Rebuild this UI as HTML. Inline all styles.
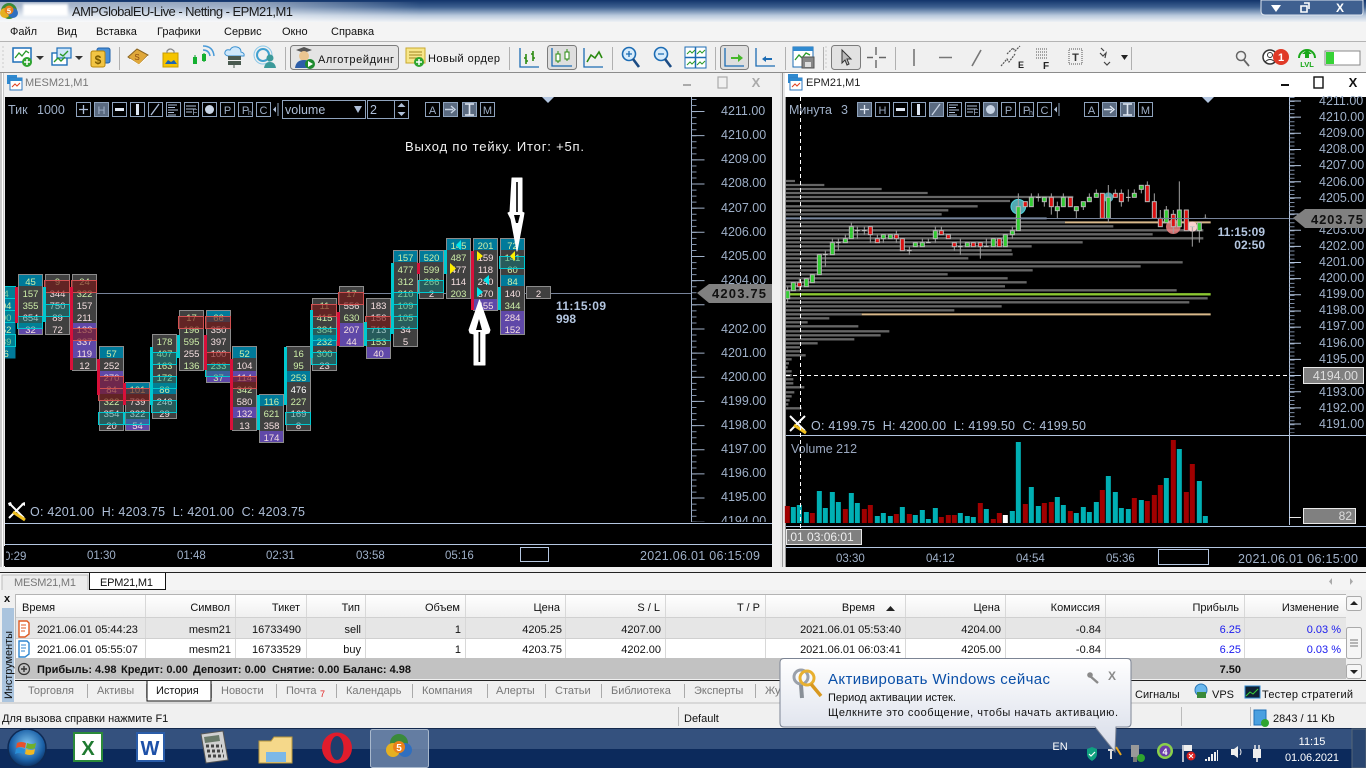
<!DOCTYPE html>
<html lang="ru"><head><meta charset="utf-8"><title>AMPGlobalEU-Live</title>
<style>
html,body{margin:0;padding:0;background:#f0f0f0;overflow:hidden;width:1366px;height:768px}
svg{display:block;font-family:"Liberation Sans","Noto Sans CJK SC",sans-serif}
text{white-space:pre}
.ui{font-size:11px;fill:#111}
.e{text-anchor:end}
.m{text-anchor:middle}
.cg{font-size:12.5px;fill:#aebfd8}
.ax{font-size:12.5px;fill:#9fb0c8}
.tl{font-size:11.5px;fill:#9fb0c8}
.tb{fill:none;stroke:#8fa3bd}
.tbt{font-size:11px;fill:#9fb0c8;text-anchor:middle}
.tabg{font-size:11px;fill:#777}
.g{fill:#404040;stroke:#8c8c8c}
.t{fill:#007a9a}
.p{fill:#5f48a8}
.rb{fill:rgba(120,20,20,.62);stroke:#d05050}
.bx{fill:rgba(0,140,140,.38);stroke:#00c8d0}
.fp text{font-size:9.5px;text-anchor:middle;fill:#cdeea8}
.fp text.c{fill:#f5dfe0}
.bar{stroke:none}
</style></head><body>
<svg width="1366" height="768" viewBox="0 0 1366 768" xmlns="http://www.w3.org/2000/svg">
<defs>
<linearGradient id="tg" x1="0" y1="0" x2="0" y2="1"><stop offset="0" stop-color="#12346a"/><stop offset=".32" stop-color="#3d6090"/><stop offset=".7" stop-color="#b8c8dc"/><stop offset="1" stop-color="#eef1f5"/></linearGradient>
<linearGradient id="gl" x1="0" y1="0" x2="1" y2="0"><stop offset="0" stop-color="#fff" stop-opacity=".6"/><stop offset=".6" stop-color="#fff" stop-opacity=".5"/><stop offset="1" stop-color="#fff" stop-opacity="0"/></linearGradient>
<linearGradient id="hd" x1="0" y1="0" x2="0" y2="1"><stop offset="0" stop-color="#fff"/><stop offset="1" stop-color="#efefef"/></linearGradient>
<linearGradient id="pop" x1="0" y1="0" x2="0" y2="1"><stop offset="0" stop-color="#fff"/><stop offset="1" stop-color="#d6dbe8"/></linearGradient>
<radialGradient id="orb" cx=".5" cy=".4" r=".6"><stop offset="0" stop-color="#7fc4ee"/><stop offset=".7" stop-color="#1c62a8"/><stop offset="1" stop-color="#0c2f60"/></radialGradient>
<clipPath id="cl"><rect x="5" y="97" width="686" height="426"/></clipPath>
<clipPath id="cr"><rect x="786" y="97" width="503" height="430"/></clipPath>
<filter id="soft"><feGaussianBlur stdDeviation="1.2"/></filter>
</defs>
<rect width="1366" height="768" fill="#f0f0f0"/>

<!-- title bar -->
<rect width="1366" height="22" fill="url(#tg)"/>
<rect x="0" y="2" width="420" height="20" fill="url(#gl)"/>
<circle cx="9" cy="11" r="8" fill="#3a8a3a"/><circle cx="5" cy="13" r="5" fill="#e6b020"/><circle cx="13" cy="13" r="5" fill="#2f6fbf"/><circle cx="9" cy="10" r="4.5" fill="#e8801a"/>
<text x="9" y="13.5" class="m" font-size="7.5" font-weight="bold" fill="#fff">5</text>
<rect x="23" y="4" width="45" height="12" fill="#fff" filter="url(#soft)"/>
<text x="72" y="16" font-size="13" fill="#1a1a1a" textLength="221">AMPGlobalEU-Live - Netting - EPM21,M1</text>
<path d="M1261 0V11q0 4 4 4H1361q2 0 2-4V0z" fill="#3f6090" stroke="#dfe6f0"/>
<path d="M1271 5h10l-5 7z" fill="#fff"/><path d="M1301 6h6v6h-6zM1304 3h5v6" fill="none" stroke="#fff" stroke-width="1.6"/>
<text x="1340" y="12" class="m" font-size="12" font-weight="bold" fill="#fff">X</text>

<!-- menu -->
<rect y="22" width="1366" height="19" fill="#f4f4f4"/>
<g class="ui" font-size="11"><text class="ui" x="10" y="35">Файл</text><text class="ui" x="57" y="35">Вид</text><text class="ui" x="96" y="35">Вставка</text><text class="ui" x="157" y="35">Графики</text><text class="ui" x="224" y="35">Сервис</text><text class="ui" x="282" y="35">Окно</text><text class="ui" x="331" y="35">Справка</text></g>
<rect y="41" width="1366" height="1" fill="#b4b4b4"/>
<rect y="42" width="1366" height="30" fill="#f0f0f0"/>
<rect y="72" width="1366" height="1" fill="#8c8c8c"/>

<!-- main toolbar -->
<path d="M3 46v24" stroke="#ccc" stroke-dasharray="2 2"/>
<rect x="13" y="48" width="18" height="14" fill="#fff" stroke="#1e6fb8" stroke-width="1.5"/><path d="M15 58l4-5 3 3 4-5 3 2" fill="none" stroke="#2a9a2a" stroke-width="1.3"/><circle cx="27" cy="62" r="5" fill="#2fa52f"/><path d="M24 62h6M27 59v6" stroke="#fff" stroke-width="1.5"/>
<path d="M36 56h8l-4 4z" fill="#333"/>
<rect x="52" y="53" width="15" height="12" fill="#fff" stroke="#1e6fb8" stroke-width="1.4"/><rect x="57" y="48" width="14" height="10" fill="#cfe6fa" stroke="#1e6fb8" stroke-width="1.2"/><path d="M54 62l4-4 3 3 4-4M60 54l3 2 5-5" fill="none" stroke="#2a9a2a" stroke-width="1.4"/>
<path d="M75 56h8l-4 4z" fill="#333"/>
<rect x="97" y="48" width="13" height="15" rx="2" fill="#4b90d8" stroke="#1e5fa8"/><rect x="91" y="51" width="14" height="16" rx="2" fill="#f2c544" stroke="#b8860b"/><text x="98" y="64" class="m" font-size="12" font-weight="bold" fill="#7a5a00">$</text>
<rect x="119" y="47" width="1" height="23" fill="#b0b0b0"/>
<path d="M128 57l9-8 11 6-9 10z" fill="#e0a83a" stroke="#8a6420"/><path d="M130 59l9 6 9-9" fill="none" stroke="#fff" stroke-width="1"/><text x="137" y="60" class="m" font-size="8" fill="#8a4a10">S</text>
<path d="M163 53h15v14h-15z" fill="#f5c400" stroke="#c99c00"/><path d="M167 53v-2q3-4 7 0v2" fill="none" stroke="#888" stroke-width="1.2"/><path d="M165 64l3-4 3 2 3-2 3 4z" fill="#1c64b4"/>
<path d="M195 55v9M204 53v9" stroke="#0c9a2a" stroke-width="1"/><rect x="193" y="57" width="4" height="7" fill="#14b030"/><rect x="202" y="54" width="4" height="7" fill="#14b030"/><path d="M203 50q6 0 7 6M203 46q10 0 11 10" fill="none" stroke="#4a9bd8" stroke-width="1.5"/>
<path d="M228 56q-4-1-3-4 1-3 5-2 2-4 7-3 4 1 4 5 4 1 3 4z" fill="#cfe8fb" stroke="#3a90d0"/><rect x="228" y="56" width="13" height="4" fill="#4a5a50"/><rect x="228" y="61" width="13" height="4" fill="#4a5a50"/><path d="M234 65v3" stroke="#4a5a50"/>
<circle cx="263" cy="55" r="6" fill="none" stroke="#40a0d0" stroke-width="2"/><circle cx="263" cy="55" r="9" fill="none" stroke="#8cc8e8"/><circle cx="270" cy="58" r="3.5" fill="#3c9a9a"/><path d="M264 68q1-6 6-6 5 0 6 6z" fill="#3c9a9a"/>
<rect x="285" y="47" width="1" height="23" fill="#b0b0b0"/>
<rect x="290.5" y="45.5" width="108" height="24" rx="3" fill="#e4e4e4" stroke="#7c7c7c"/>
<path d="M296 50l8-3 8 3-8 3z" fill="#555"/><circle cx="304" cy="56" r="5" fill="#eac590"/><path d="M295 68q1-8 9-8t8 8z" fill="#2d5ea8"/><circle cx="310" cy="64" r="5" fill="#1d8a2e"/><path d="M308 61l5 3-5 3z" fill="#fff"/>
<text x="318" y="63" class="ui" textLength="76">Алготрейдинг</text>
<rect x="406" y="48" width="19" height="15" fill="#f7e68a" stroke="#c9a92c"/><path d="M409 52h13M409 55h13M409 58h13" stroke="#a08522"/><circle cx="419" cy="62" r="5" fill="#2fa52f"/><path d="M416 62h6M419 59v6" stroke="#fff" stroke-width="1.5"/>
<text x="428" y="62" class="ui" textLength="72">Новый ордер</text>
<rect x="509" y="47" width="1" height="23" fill="#b0b0b0"/>
<g fill="none" stroke="#1c6cb4" stroke-width="1.3"><path d="M520 48v19h19M584 48v19h19"/></g>
<path d="M526 54v10M533 51v10M524 58h2M526 61h2M531 54h2M533 58h2" stroke="#2a8a10" stroke-width="1.6" fill="none"/>
<rect x="547.5" y="45.5" width="29" height="24" rx="3" fill="#dedede" stroke="#7c7c7c"/>
<path d="M552 48v18h20" fill="none" stroke="#1c6cb4" stroke-width="1.3"/><path d="M558 51v12M567 49v12" stroke="#2a8a10"/><rect x="556" y="54" width="4" height="7" fill="#fff" stroke="#2a8a10"/><rect x="565" y="52" width="4" height="7" fill="#fff" stroke="#2a8a10"/>
<path d="M587 62l4-7 4 3 4-6 3 6" fill="none" stroke="#2a8a10" stroke-width="1.6"/>
<rect x="612" y="47" width="1" height="23" fill="#b0b0b0"/>
<g fill="#d8ecfb" stroke="#1c6cb4" stroke-width="1.6"><circle cx="629" cy="54" r="6.5"/><circle cx="661" cy="54" r="6.5"/></g>
<path d="M633 59l6 8M665 59l6 8" stroke="#1c4c84" stroke-width="2.6"/><path d="M626 54h6M629 51v6M658 54h6" stroke="#1c6cb4" stroke-width="1.3"/>
<rect x="685" y="47" width="21" height="21" fill="#fff" stroke="#1c6cb4"/><path d="M685 57.5h21M695.5 47v21" stroke="#1c6cb4" stroke-width="1.5"/><path d="M687 54l3-3 2 2 3-3M697 54l3-3 2 2 3-3M687 65l3-3 2 2 3-3M697 65l3-3 2 2 3-3" fill="none" stroke="#2a9a2a"/>
<rect x="715" y="47" width="1" height="23" fill="#b0b0b0"/>
<rect x="720.5" y="45.5" width="28" height="24" rx="3" fill="#dedede" stroke="#7c7c7c"/>
<path d="M725 48v18h19M756 48v18h19" fill="none" stroke="#1c6cb4" stroke-width="1.3"/><path d="M731 57h7v-3l5 4-5 4v-3h-7z" fill="#45b82a"/><path d="M772 58h-6v-2l-4 3 4 3v-2h6z" fill="#1c6cb4"/>
<rect x="785" y="47" width="1" height="23" fill="#b0b0b0"/>
<rect x="793" y="47" width="20" height="20" fill="#fff" stroke="#1c6cb4"/><rect x="793" y="47" width="20" height="4" fill="#2f8ad0"/><path d="M795 60l4-5 3 3 4-5 4 2" fill="none" stroke="#2a9a2a" stroke-width="1.3"/><rect x="802" y="57" width="12" height="11" fill="#888" stroke="#555"/><rect x="805" y="62" width="6" height="5" fill="#ddd"/>
<rect x="823" y="47" width="1" height="23" fill="#b0b0b0"/>
<path d="M826 46v24" stroke="#ccc" stroke-dasharray="2 2"/>
<rect x="831.5" y="45.5" width="29" height="24" rx="3" fill="#e2e2e2" stroke="#7c7c7c"/>
<path d="M842 50v13l3-3 2 5 2-1-2-5h4z" fill="#bbb" stroke="#333"/>
<path d="M876 47v8M876 60v8M867 57.5h6M879 57.5h7" stroke="#666" stroke-width="1.4"/>
<rect x="895" y="47" width="1" height="23" fill="#b0b0b0"/>
<path d="M914 49v17M939 57.5h13M972 66l9-16" stroke="#777" stroke-width="1.6"/>
<path d="M1001 66l6-7 2 3 6-8M1007 54l6-6 2 3 5-5" fill="none" stroke="#555" stroke-width="1.2" stroke-dasharray="2 1"/><text x="1018" y="68" font-size="9" font-weight="bold" fill="#222">E</text>
<path d="M1036 49h12M1036 52h12M1036 55h12M1036 58h12" stroke="#555" stroke-dasharray="1 1"/><text x="1043" y="69" font-size="10" font-weight="bold" fill="#222">F</text>
<rect x="1069" y="49" width="13" height="15" fill="none" stroke="#555" stroke-dasharray="1 1"/><text x="1075.5" y="61" class="m" font-size="11" font-weight="bold" fill="#333">T</text>
<path d="M1100 53l3 3 3-3-1 5M1104 62l3 3 3-3M1101 48l3 3" fill="none" stroke="#444" stroke-width="1.2"/>
<path d="M1121 55h7l-3.500 5z" fill="#222"/>
<rect x="1131" y="47" width="1" height="23" fill="#b0b0b0"/>
<circle cx="1241" cy="56" r="4.500" fill="none" stroke="#666" stroke-width="1.5"/><path d="M1244 60l5 6" stroke="#666" stroke-width="1.8"/>
<circle cx="1270" cy="57" r="7" fill="#fff" stroke="#333" stroke-width="1.5"/><circle cx="1270" cy="55" r="2.500" fill="none" stroke="#333"/><path d="M1265 62q5-5 10 0" fill="none" stroke="#333"/>
<circle cx="1281" cy="57" r="8" fill="#e03a28"/><text x="1281" y="61" class="m" font-size="11" font-weight="bold" fill="#fff">1</text>
<path d="M1299 58a8 8 0 0 1 16 0" fill="none" stroke="#1aa81a" stroke-width="2"/><path d="M1307 50l5 4h-3v4h-4v-4h-3z" fill="#1aa81a"/><text x="1307" y="67" class="m" font-size="7.500" font-weight="bold" fill="#1aa81a">LVL</text>
<rect x="1325" y="51" width="35" height="14" fill="#fff" stroke="#888"/><rect x="1326" y="52" width="8" height="12" fill="#36d236"/>

<!-- windows -->
<rect y="73" width="780" height="499" fill="#f0f0f0"/>
<rect x="0" y="73" width="4" height="499" fill="#c9c9c9"/>
<rect x="2" y="73" width="1" height="499" fill="#fff"/>
<rect x="7" y="75" width="10" height="9" fill="#2f8ad0"/><rect x="10" y="78" width="12" height="12" fill="#fff" stroke="#2f7ac0"/><rect x="10" y="78" width="12" height="3" fill="#2f8ad0"/><path d="M12 87l3-3 2 2 3-3" stroke="#e04020" fill="none"/>
<text x="25" y="86" font-size="11" fill="#777">MESM21,M1</text>
<path d="M683 85h8" stroke="#aaa" stroke-width="2"/><rect x="718" y="77" width="9" height="11" fill="none" stroke="#aaa" stroke-width="1.2"/><text x="756" y="87" class="m" font-size="13" font-weight="bold" fill="#aaa">X</text>
<rect x="780" y="73" width="586" height="499" fill="#fff"/><rect x="780" y="73" width="5" height="499" fill="#e8e8e8"/><rect x="782" y="73" width="1" height="499" fill="#999"/>
<rect x="788" y="74" width="10" height="9" fill="#2f8ad0"/><rect x="790" y="78" width="12" height="12" fill="#fff" stroke="#2f7ac0"/><rect x="790" y="78" width="12" height="3" fill="#2f8ad0"/><path d="M792 87l3-3 2 2 3-3" stroke="#e04020" fill="none"/>
<text x="806" y="86" font-size="11" fill="#222">EPM21,M1</text>
<path d="M1281 85h8" stroke="#111" stroke-width="2"/><rect x="1314" y="77" width="9" height="11" fill="none" stroke="#111" stroke-width="1.400"/><text x="1353" y="87" class="m" font-size="13" font-weight="bold" fill="#111">X</text>

<!-- LEFT CHART -->
<rect x="5" y="97" width="767" height="470" fill="#000"/>
<text x="8" y="114" class="cg" style="fill:#9fb0c8">Тик</text><text x="37" y="114" class="cg" style="fill:#9fb0c8">1000</text>
<g class="tb">
<rect x="76.500" y="102.500" width="14" height="14"/><rect x="94.500" y="102.500" width="14" height="14" fill="#5a6a80"/><rect x="112.500" y="102.500" width="14" height="14"/><rect x="130.500" y="102.500" width="14" height="14"/><rect x="148.500" y="102.500" width="14" height="14"/><rect x="166.500" y="102.500" width="14" height="14"/><rect x="184.500" y="102.500" width="14" height="14"/><rect x="202.500" y="102.500" width="14" height="14"/><rect x="220.500" y="102.500" width="14" height="14"/><rect x="238.500" y="102.500" width="14" height="14"/><rect x="256.500" y="102.500" width="14" height="14"/>
<rect x="425.500" y="102.500" width="14" height="14"/><rect x="443.500" y="102.500" width="14" height="14" fill="#5a6a80"/><rect x="462.500" y="102.500" width="14" height="14" fill="#5a6a80"/><rect x="480.500" y="102.500" width="14" height="14"/>
<rect x="282.500" y="100.500" width="83" height="18"/><rect x="367.500" y="100.500" width="27" height="18"/><rect x="394.500" y="100.500" width="14" height="18"/>
</g>
<path d="M83.500 105v9M79 109.500h9M151 115l8-11" stroke="#aebfd8" stroke-width="1.300" fill="none"/>
<text x="101.500" y="114" class="tbt" style="fill:#9fb0c8">H</text>
<path d="M115 108h9v3h-9z" fill="#dfe7f2"/><path d="M136 104h3v11h-3z" fill="#dfe7f2"/>
<path d="M168 105h9M168 107.500h7M168 110h10M168 112.500h6M168 115h8M186 106h10M186 109h10M186 112h6" stroke="#aebfd8" fill="none"/>
<text x="195" y="115" class="tbt" style="font-size:8px">F</text>
<circle cx="209.500" cy="109.500" r="4.500" fill="#c8d4e4"/>
<text x="227.500" y="114" class="tbt">P</text><text x="245.500" y="114" class="tbt">P</text><text x="250" y="115" class="tbt" style="font-size:7px">h</text><text x="263.500" y="114" class="tbt">C</text>
<path d="M273 109.500l3-3v6z" fill="#aebfd8"/><path d="M278 103v13" stroke="#8fa3bd"/>
<text x="285" y="114" font-size="12.500" fill="#aebfd8">volume</text><path d="M354 106h8l-4 7z" fill="#aebfd8"/>
<text x="370" y="114" font-size="12.500" fill="#aebfd8">2</text><path d="M397.500 107l4-4 4 4zM397.500 112l4 4 4-4z" fill="#aebfd8"/>
<text x="432.500" y="114" class="tbt">A</text><path d="M445 109.500h8M451 106l4 3.500-4 3.500" stroke="#c8d4e4" fill="none" stroke-width="1.400"/><path d="M465 104h9M465 115h9M469.500 104v11" stroke="#dfe7f2" stroke-width="1.600" fill="none"/><text x="487.500" y="114" class="tbt">M</text>
<path d="M542 97h12l-6 6z" fill="#b4c6e0"/>

<!-- left axis -->
<path d="M691.500 97V522" stroke="#9fb0c8"/>
<line x1="694" x2="694" y1="99" y2="522" stroke="#8494ac" stroke-width="5" stroke-dasharray="1 5.040"/>
<line x1="698" x2="698" y1="111" y2="522" stroke="#9fb0c8" stroke-width="13" stroke-dasharray="1 23.160"/>
<g class="ax"><text class="ax" x="721" y="115">4211.00</text><text class="ax" x="721" y="139">4210.00</text><text class="ax" x="721" y="163">4209.00</text><text class="ax" x="721" y="187">4208.00</text><text class="ax" x="721" y="212">4207.00</text><text class="ax" x="721" y="236">4206.00</text><text class="ax" x="721" y="260">4205.00</text><text class="ax" x="721" y="284">4204.00</text><text class="ax" x="721" y="333">4202.00</text><text class="ax" x="721" y="357">4201.00</text><text class="ax" x="721" y="381">4200.00</text><text class="ax" x="721" y="405">4199.00</text><text class="ax" x="721" y="429">4198.00</text><text class="ax" x="721" y="453">4197.00</text><text class="ax" x="721" y="477">4196.00</text><text class="ax" x="721" y="501">4195.00</text><text class="ax" x="721" y="525">4194.00</text></g>
<rect x="696" y="522" width="76" height="1.500" fill="#000"/>
<rect x="696" y="524" width="76" height="20" fill="#000"/>
<path d="M5 293.500H691" stroke="#77839a"/>
<path d="M697 293l12-9H772v19H709z" fill="#808080"/><text x="712" y="298" font-size="13" font-weight="bold" fill="#111" textLength="54">4203.75</text>

<!-- footprint -->
<g clip-path="url(#cl)">
<g class="fp">
<g transform="translate(-8.500 286.500)"><rect class="t" width="24" height="72"/><text x="12" y="10.500">44</text><text x="12" y="22.500">104</text><text x="12" y="34.500">300</text><text x="12" y="46.500">652</text><text x="12" y="58.500">189</text><text x="12" y="70.500">26</text><rect class="bx" x="-1" y="0" width="25" height="12"/><rect class="bx" x="-1" y="24" width="25" height="12"/><rect class="bx" x="-1" y="48" width="25" height="12"/></g>
<g transform="translate(18.500 274.500)"><rect class="g" width="24" height="60"/><rect class="t" x=".5" y=".5" width="23" height="11"/><rect class="t" x=".5" y="48.500" width="23" height="5"/><rect class="p" x=".5" y="53" width="23" height="6.500"/><text x="12" y="10.500">45</text><text x="12" y="22.500">157</text><text x="12" y="34.500">355</text><text x="12" y="46.500" class="c">654</text><text x="12" y="58.500" class="c">32</text><rect class="bx" x="-1" y="42" width="25" height="12"/></g>
<g transform="translate(45.500 274.500)"><rect class="g" width="24" height="60"/><text x="12" y="10.500">9</text><text x="12" y="22.500" class="c">344</text><text x="12" y="34.500" class="c">750</text><text x="12" y="46.500" class="c">89</text><text x="12" y="58.500" class="c">72</text><rect class="rb" x="-1" y="6" width="25" height="12"/><rect class="bx" x="-1" y="30" width="25" height="12"/></g>
<g transform="translate(72.500 274.500)"><rect class="g" width="24" height="96"/><rect class="p" x=".5" y="48.500" width="23" height="35"/><text x="12" y="10.500">24</text><text x="12" y="22.500">322</text><text x="12" y="34.500" class="c">157</text><text x="12" y="46.500" class="c">211</text><text x="12" y="58.500" class="c">133</text><text x="12" y="70.500" class="c">337</text><text x="12" y="82.500" class="c">119</text><text x="12" y="94.500" class="c">12</text><rect class="rb" x="-1" y="6" width="25" height="12"/><rect class="rb" x="-1" y="54" width="25" height="12"/></g>
<g transform="translate(99.500 346.500)"><rect class="g" width="24" height="84"/><rect class="t" x=".5" y=".5" width="23" height="11"/><rect class="p" x=".5" y="24.500" width="23" height="23"/><text x="12" y="10.500">57</text><text x="12" y="22.500" class="c">252</text><text x="12" y="34.500" class="c">270</text><text x="12" y="46.500" class="c">84</text><text x="12" y="58.500">322</text><text x="12" y="70.500" class="c">354</text><text x="12" y="82.500" class="c">20</text><rect class="rb" x="-1" y="30" width="25" height="12"/><rect class="rb" x="-1" y="42" width="25" height="12"/><rect class="bx" x="-1" y="66" width="25" height="12"/></g>
<g transform="translate(125.500 382.500)"><rect class="g" width="24" height="48"/><rect class="t" x=".5" y=".5" width="23" height="11"/><rect class="p" x=".5" y="36.500" width="23" height="11"/><text x="12" y="10.500">101</text><text x="12" y="22.500" class="c">739</text><text x="12" y="34.500" class="c">322</text><text x="12" y="46.500" class="c">54</text><rect class="rb" x="-1" y="6" width="25" height="12"/><rect class="bx" x="-1" y="30" width="25" height="12"/></g>
<g transform="translate(152.500 334.500)"><rect class="g" width="24" height="84"/><rect class="t" x=".5" y="48.500" width="23" height="11"/><text x="12" y="10.500">178</text><text x="12" y="22.500">407</text><text x="12" y="34.500">163</text><text x="12" y="46.500">172</text><text x="12" y="58.500">86</text><text x="12" y="70.500" class="c">246</text><text x="12" y="82.500" class="c">29</text><rect class="bx" x="-1" y="18" width="25" height="12"/><rect class="bx" x="-1" y="42" width="25" height="12"/><rect class="bx" x="-1" y="66" width="25" height="12"/></g>
<g transform="translate(179.500 310.500)"><rect class="g" width="24" height="60"/><text x="12" y="10.500">17</text><text x="12" y="22.500">196</text><text x="12" y="34.500">595</text><text x="12" y="46.500" class="c">255</text><text x="12" y="58.500">136</text><rect class="rb" x="-1" y="6" width="25" height="12"/></g>
<g transform="translate(206.500 310.500)"><rect class="g" width="24" height="72"/><rect class="t" x=".5" y=".5" width="23" height="11"/><rect class="p" x=".5" y="60.500" width="23" height="11"/><text x="12" y="10.500">66</text><text x="12" y="22.500" class="c">350</text><text x="12" y="34.500" class="c">397</text><text x="12" y="46.500" class="c">100</text><text x="12" y="58.500">233</text><text x="12" y="70.500">37</text><rect class="rb" x="-1" y="6" width="25" height="12"/><rect class="rb" x="-1" y="42" width="25" height="12"/><rect class="bx" x="-1" y="54" width="25" height="12"/></g>
<g transform="translate(232.500 346.500)"><rect class="g" width="24" height="84"/><rect class="t" x=".5" y=".5" width="23" height="11"/><rect class="p" x=".5" y="24.500" width="23" height="11"/><rect class="p" x=".5" y="60.500" width="23" height="11"/><text x="12" y="10.500">52</text><text x="12" y="22.500" class="c">104</text><text x="12" y="34.500" class="c">114</text><text x="12" y="46.500">342</text><text x="12" y="58.500" class="c">580</text><text x="12" y="70.500" class="c">132</text><text x="12" y="82.500" class="c">13</text><rect class="rb" x="-1" y="30" width="25" height="12"/></g>
<g transform="translate(259.500 394.500)"><rect class="g" width="24" height="48"/><rect class="t" x=".5" y=".5" width="23" height="11"/><rect class="p" x=".5" y="36.500" width="23" height="11"/><text x="12" y="10.500">116</text><text x="12" y="22.500">621</text><text x="12" y="34.500" class="c">358</text><text x="12" y="46.500" class="c">174</text></g>
<g transform="translate(286.500 346.500)"><rect class="g" width="24" height="84"/><rect class="t" x=".5" y="24.500" width="23" height="11"/><text x="12" y="10.500">16</text><text x="12" y="22.500">95</text><text x="12" y="34.500">253</text><text x="12" y="46.500" class="c" style="fill:#fff">476</text><text x="12" y="58.500">227</text><text x="12" y="70.500" class="c">169</text><text x="12" y="82.500" class="c">8</text><rect class="bx" x="-1" y="66" width="25" height="12"/></g>
<g transform="translate(312.500 298.500)"><rect class="g" width="24" height="72"/><rect class="t" x=".5" y="36.500" width="23" height="11"/><text x="12" y="10.500">11</text><text x="12" y="22.500">415</text><text x="12" y="34.500">384</text><text x="12" y="46.500">232</text><text x="12" y="58.500">300</text><text x="12" y="70.500" class="c">23</text><rect class="rb" x="-1" y="6" width="25" height="12"/><rect class="bx" x="-1" y="30" width="25" height="12"/><rect class="bx" x="-1" y="54" width="25" height="12"/></g>
<g transform="translate(339.500 286.500)"><rect class="g" width="24" height="60"/><rect class="p" x=".5" y="36.500" width="23" height="23"/><text x="12" y="10.500">17</text><text x="12" y="22.500" class="c">556</text><text x="12" y="34.500">630</text><text x="12" y="46.500" class="c">207</text><text x="12" y="58.500" class="c">44</text><rect class="rb" x="-1" y="6" width="25" height="12"/></g>
<g transform="translate(366.500 298.500)"><rect class="g" width="24" height="60"/><rect class="p" x=".5" y="48.500" width="23" height="11"/><text x="12" y="10.500" class="c">183</text><text x="12" y="22.500" class="c">156</text><text x="12" y="34.500" class="c">713</text><text x="12" y="46.500">153</text><text x="12" y="58.500" class="c">40</text><rect class="rb" x="-1" y="18" width="25" height="12"/><rect class="bx" x="-1" y="30" width="25" height="12"/></g>
<g transform="translate(393.500 250.500)"><rect class="g" width="24" height="96"/><rect class="t" x=".5" y=".5" width="23" height="11"/><text x="12" y="10.500">157</text><text x="12" y="22.500">477</text><text x="12" y="34.500">312</text><text x="12" y="46.500">210</text><text x="12" y="58.500">109</text><text x="12" y="70.500">105</text><text x="12" y="82.500" class="c">34</text><text x="12" y="94.500" class="c">5</text><rect class="bx" x="-1" y="42" width="25" height="12"/><rect class="bx" x="-1" y="54" width="25" height="12"/><rect class="bx" x="-1" y="66" width="25" height="12"/></g>
<g transform="translate(419.500 250.500)"><rect class="g" width="24" height="48"/><rect class="t" x=".5" y=".5" width="23" height="11"/><text x="12" y="10.500">520</text><text x="12" y="22.500">599</text><text x="12" y="34.500">266</text><text x="12" y="46.500" class="c">2</text><rect class="bx" x="-1" y="30" width="25" height="12"/></g>
<g transform="translate(446.500 238.500)"><rect class="g" width="24" height="60"/><rect class="t" x=".5" y=".5" width="23" height="11"/><text x="12" y="10.500">145</text><text x="12" y="22.500">487</text><text x="12" y="34.500" class="c">477</text><text x="12" y="46.500" class="c">114</text><text x="12" y="58.500">203</text></g>
<g transform="translate(473.500 238.500)"><rect class="g" width="24" height="72"/><rect class="t" x=".5" y=".5" width="23" height="11"/><rect class="p" x=".5" y="60.500" width="23" height="11"/><text x="12" y="10.500">201</text><text x="12" y="22.500" class="c">159</text><text x="12" y="34.500" class="c">118</text><text x="12" y="46.500" class="c">240</text><text x="12" y="58.500" class="c">370</text><text x="12" y="70.500" class="c">455</text></g>
<g transform="translate(500.500 238.500)"><rect class="g" width="24" height="96"/><rect class="t" x=".5" y=".5" width="23" height="11"/><rect class="t" x=".5" y="36.500" width="23" height="11"/><rect class="p" x=".5" y="72.500" width="23" height="23"/><text x="12" y="10.500">72</text><text x="12" y="22.500">141</text><text x="12" y="34.500">60</text><text x="12" y="46.500">84</text><text x="12" y="58.500" class="c">140</text><text x="12" y="70.500">344</text><text x="12" y="82.500" class="c">284</text><text x="12" y="94.500" class="c">152</text><rect class="bx" x="-1" y="18" width="25" height="12"/></g>
<g transform="translate(526.500 286.500)"><rect class="g" width="24" height="12"/><text x="12" y="10.500" class="c">2</text></g>
</g>
<g fill="#d8103a">
<rect x="15" y="287" width="3" height="36"/><rect x="70" y="287" width="3" height="83"/><rect x="97" y="359" width="3" height="36"/><rect x="123" y="383" width="3" height="22"/><rect x="204" y="335" width="3" height="35"/><rect x="230" y="359" width="3" height="71"/><rect x="337" y="312" width="3" height="34"/><rect x="417" y="263" width="3" height="11"/><rect x="471" y="251" width="3" height="59"/>
</g>
<g fill="#00c8d0">
<rect x="43" y="287" width="3" height="35"/><rect x="150" y="347" width="3" height="58"/><rect x="177" y="335" width="3" height="23"/><rect x="257" y="395" width="3" height="35"/><rect x="284" y="347" width="3" height="58"/><rect x="310" y="310" width="3" height="48"/><rect x="364" y="322" width="3" height="24"/><rect x="391" y="263" width="3" height="71"/><rect x="444" y="250" width="3" height="24"/><rect x="498" y="287" width="3" height="23"/>
</g>
<path d="M456 245l5-5v10zM483 280l6-5v10zM477 287v10l6-5z" fill="#00e5ee"/>
<path d="M477 251v10l6-5zM450 263v11l6-5.500zM510 256l5-5v10z" fill="#ffee00"/>
</g>
<!-- white arrows -->
<path d="M512 178h10v34l2 1-1 6-6 32-6-32-3-6 2-1z" fill="#fff" stroke="#fff" stroke-linejoin="round"/>
<path d="M516.200 182h1.600v30h-1.600zM514 215h6l-2 8h-2z" fill="#000"/>
<path d="M479.500 300l10.500 30-1 3-4 1v31h-11v-31l-4-1-1-3z" fill="#fff" stroke="#fff" stroke-linejoin="round"/>
<path d="M479 319l3 11h-6zM478.500 332h1.700v30h-1.700z" fill="#000"/>

<text x="405" y="151" font-size="13" fill="#f2f2f2" textLength="179">Выход по тейку. Итог: +5п.</text>
<text x="556" y="310" font-size="12" font-weight="bold" fill="#b4c6e0" textLength="50">11:15:09</text>
<text x="556" y="323" font-size="12" font-weight="bold" fill="#b4c6e0">998</text>
<path d="M9 503l15 15M24 503l-15 15" stroke="#fff" stroke-width="2"/><path d="M13 512l12 8" stroke="#f0c020" stroke-width="3"/><path d="M8 503l3-1 1 3-3 1zM21 504l4-2 0 4z" fill="#fff"/>
<text x="30" y="516" class="cg" textLength="275">O: 4201.00  H: 4203.75  L: 4201.00  C: 4203.75</text>
<path d="M5 523.500H772M5 544.500H772" stroke="#b4c6e0"/>
<text x="4" y="560" class="tl">0:29</text><text x="87" y="559" class="tl">01:30</text><text x="177" y="559" class="tl">01:48</text><text x="266" y="559" class="tl">02:31</text><text x="356" y="559" class="tl">03:58</text><text x="445" y="559" class="tl">05:16</text>
<rect x="4" y="546" width="2" height="20" fill="#000"/>
<rect x="520.500" y="547.500" width="28" height="14" fill="none" stroke="#b4c6e0"/>
<text x="640" y="560" font-size="12.500" fill="#9fb0c8" textLength="120">2021.06.01 06:15:09</text>

<!-- RIGHT CHART -->
<rect x="785" y="97" width="581" height="470" fill="#000"/>
<text x="789" y="114" class="cg" style="fill:#9fb0c8" textLength="43">Минута</text><text x="841" y="114" class="cg" style="fill:#9fb0c8">3</text>
<g class="tb">
<rect x="857.500" y="102.500" width="14" height="14" fill="#5a6a80"/><rect x="875.500" y="102.500" width="14" height="14"/><rect x="893.500" y="102.500" width="14" height="14"/><rect x="911.500" y="102.500" width="14" height="14"/><rect x="929.500" y="102.500" width="14" height="14" fill="#5a6a80"/><rect x="947.500" y="102.500" width="14" height="14"/><rect x="965.500" y="102.500" width="14" height="14"/><rect x="983.500" y="102.500" width="14" height="14" fill="#5a6a80"/><rect x="1001.500" y="102.500" width="14" height="14"/><rect x="1019.500" y="102.500" width="14" height="14"/><rect x="1037.500" y="102.500" width="14" height="14"/>
<rect x="1084.500" y="102.500" width="14" height="14"/><rect x="1102.500" y="102.500" width="14" height="14" fill="#5a6a80"/><rect x="1120.500" y="102.500" width="14" height="14" fill="#5a6a80"/><rect x="1138.500" y="102.500" width="14" height="14"/>
</g>
<path d="M864.500 105v9M860 109.500h9" stroke="#dfe7f2" stroke-width="1.300"/><text x="882.500" y="114" class="tbt">H</text>
<path d="M896 108h9v3h-9z" fill="#dfe7f2"/><path d="M917 104h3v11h-3z" fill="#dfe7f2"/><path d="M932 115l8-11" stroke="#c8d4e4" stroke-width="1.300"/>
<path d="M949 105h9M949 107.500h7M949 110h10M949 112.500h6M949 115h8M967 106h10M967 109h10M967 112h6" stroke="#aebfd8" fill="none"/>
<text x="976" y="115" class="tbt" style="font-size:8px">F</text><circle cx="990.500" cy="109.500" r="4.500" fill="#c8d4e4"/>
<text x="1008.500" y="114" class="tbt">P</text><text x="1026.500" y="114" class="tbt">P</text><text x="1031" y="115" class="tbt" style="font-size:7px">h</text><text x="1044.500" y="114" class="tbt">C</text>
<path d="M1054 109.500l3-3v6z" fill="#aebfd8"/><path d="M1059 103v13" stroke="#8fa3bd"/>
<text x="1091.500" y="114" class="tbt">A</text><path d="M1104 109.500h8M1110 106l4 3.500-4 3.500" stroke="#dfe7f2" fill="none" stroke-width="1.400"/><path d="M1123 104h9M1123 115h9M1127.500 104v11" stroke="#dfe7f2" stroke-width="1.600" fill="none"/><text x="1145.500" y="114" class="tbt">M</text>
<path d="M1202 97h12l-6 6z" fill="#b4c6e0"/>

<!-- right axis -->
<path d="M1289.500 97V525" stroke="#b4c6e0"/>
<line x1="1292" x2="1292" y1="97" y2="433" stroke="#7c8ba2" stroke-width="5" stroke-dasharray="1 3.040"/>
<line x1="1295" x2="1295" y1="100.500" y2="433" stroke="#b4c6e0" stroke-width="12" stroke-dasharray="1 15.150"/>
<g class="ax">
<text class="ax" x="1319" y="105">4211.00</text><text class="ax" x="1319" y="121">4210.00</text><text class="ax" x="1319" y="137">4209.00</text><text class="ax" x="1319" y="153">4208.00</text><text class="ax" x="1319" y="169">4207.00</text><text class="ax" x="1319" y="186">4206.00</text><text class="ax" x="1319" y="202">4205.00</text><text class="ax" x="1319" y="234">4203.00</text><text class="ax" x="1319" y="250">4202.00</text><text class="ax" x="1319" y="266">4201.00</text><text class="ax" x="1319" y="282">4200.00</text><text class="ax" x="1319" y="298">4199.00</text><text class="ax" x="1319" y="314">4198.00</text><text class="ax" x="1319" y="330">4197.00</text><text class="ax" x="1319" y="347">4196.00</text><text class="ax" x="1319" y="363">4195.00</text><text class="ax" x="1319" y="396">4193.00</text><text class="ax" x="1319" y="412">4192.00</text><text class="ax" x="1319" y="428">4191.00</text></g>

<!-- profile & candles -->
<g clip-path="url(#cr)"><g transform="translate(785 170) scale(.33333)">
<path fill="none" stroke="#666" stroke-width="7" d="M3 33H30M3 45H118M3 57H290M3 69H428M3 81H865M3 93H675M3 109H578M3 121H490M3 133H470M3 157H840M3 169H985M3 181H1255M3 193H1103M3 205H1255M3 217H893M3 229H740M3 241H680M3 253H683M3 265H550M3 277H1193M3 289H1067M3 301H743M3 313H488M3 325H668M3 337H725M3 349H660M3 361H1175M3 385H1268M3 397H1213M3 409H650M3 421H508M3 433H230M3 445H133M3 457H68M3 469H220M3 484H313M3 496H287M3 508H208M3 520H98M3 532H45M3 544H45M3 556H62M3 568H20M3 580H12M3 592H8M3 604H20M3 616H20M3 628H25M3 640H25M3 652H58M3 667H28M3 679H20M3 691H14M3 703H10M3 715H50"/>
<path d="M3 145H785" stroke="#7a8ca4" stroke-width="6" fill="none"/>
<path d="M840 157H1277M230 433H1277" stroke="#d8b88a" stroke-width="6" fill="none"/>
<path d="M3 373H1277" stroke="#8cc832" stroke-width="7" fill="none"/>
<circle cx="700" cy="110" r="22" fill="rgba(110,225,235,.75)" stroke="#4fd5df" stroke-width="3"/>
<circle cx="970" cy="82" r="15" fill="rgba(110,225,235,.75)"/>
<circle cx="1165" cy="170" r="22" fill="rgba(240,130,130,.85)"/>
<circle cx="1222" cy="170" r="15" fill="#f8d0d0"/>
<path fill="none" stroke="#a0a0a0" stroke-width="3" d="M8 350V398M43 326V362M121 242V290M142 206V254M160 206V242M181 194V218M199 158V206M217 170V206M238 170V194M256 170V218M277 194V218M295 194V218M334 182V218M373 230V254M412 206V230M430 206V218M451 170V218M469 170V194M508 218V242M526 206V254M586 218V266M604 206V230M682 170V206M700 70V182M739 70V110M760 70V95M778 82V110M799 70V134M817 95V145M835 70V110M874 110V145M895 95V120M913 70V95M934 58V82M970 45V158M991 58V82M1009 58V110M1030 58V95M1048 58V82M1069 46V70M1087 34V95M1108 70V145M1126 120V170M1144 108V158M1165 120V190M1183 34V170M1222 170V230M1243 158V218M1261 133V145"/>
<path fill="none" stroke="#c8c8c8" stroke-width="3" d="M114 254H128M153 218H167M210 182H224M231 182H245M366 242H380M423 218H437M519 230H533M597 230H611M753 82H767M1023 82H1037M1215 170H1229M1254 145H1268"/>
<g fill="#33cc33" stroke="#b8b8b8" stroke-width="3">
<rect x="2" y="362" width="12" height="24"/><rect x="19" y="338" width="12" height="24"/><rect x="58" y="326" width="12" height="24"/><rect x="76" y="314" width="12" height="24"/><rect x="97" y="254" width="12" height="60"/><rect x="136" y="218" width="12" height="36"/><rect x="175" y="206" width="12" height="12"/><rect x="193" y="170" width="12" height="36"/><rect x="289" y="194" width="12" height="12"/><rect x="310" y="194" width="12" height="12"/><rect x="385" y="218" width="12" height="12"/><rect x="406" y="218" width="12" height="12"/><rect x="445" y="182" width="12" height="24"/><rect x="541" y="218" width="12" height="12"/><rect x="619" y="206" width="12" height="24"/><rect x="655" y="194" width="12" height="36"/><rect x="676" y="182" width="12" height="12"/><rect x="694" y="110" width="12" height="72"/><rect x="733" y="82" width="12" height="28"/><rect x="772" y="82" width="12" height="13"/><rect x="811" y="110" width="12" height="12"/><rect x="829" y="82" width="12" height="28"/><rect x="868" y="110" width="12" height="12"/><rect x="889" y="95" width="12" height="15"/><rect x="907" y="82" width="12" height="13"/><rect x="928" y="70" width="12" height="12"/><rect x="964" y="82" width="12" height="63"/><rect x="1042" y="70" width="12" height="12"/><rect x="1063" y="46" width="12" height="12"/><rect x="1138" y="120" width="12" height="38"/><rect x="1177" y="120" width="12" height="50"/><rect x="1237" y="158" width="12" height="24"/>
</g>
<g fill="#dd1111" stroke="#b8b8b8" stroke-width="3">
<rect x="37" y="338" width="12" height="12"/><rect x="250" y="170" width="12" height="24"/><rect x="271" y="206" width="12" height="12"/><rect x="328" y="194" width="12" height="12"/><rect x="346" y="206" width="12" height="36"/><rect x="463" y="182" width="12" height="12"/><rect x="484" y="194" width="12" height="12"/><rect x="502" y="218" width="12" height="12"/><rect x="559" y="218" width="12" height="12"/><rect x="580" y="218" width="12" height="12"/><rect x="637" y="206" width="12" height="24"/><rect x="715" y="95" width="12" height="15"/><rect x="793" y="82" width="12" height="28"/><rect x="850" y="82" width="12" height="28"/><rect x="946" y="70" width="12" height="75"/><rect x="985" y="70" width="12" height="12"/><rect x="1003" y="70" width="12" height="25"/><rect x="1081" y="46" width="12" height="49"/><rect x="1102" y="95" width="12" height="50"/><rect x="1120" y="145" width="12" height="25"/><rect x="1159" y="133" width="12" height="37"/><rect x="1198" y="120" width="12" height="62"/>
</g>
</g></g>
<path d="M1040 218.500H1289" stroke="#77839a"/>
<path d="M786 218.500H1040" stroke="#77839a"/>
<path d="M1293 218l12-9H1366v19H1305z" fill="#808080"/><text x="1311" y="224" font-size="13" font-weight="bold" fill="#111" textLength="52">4203.75</text>
<text x="1265" y="236" class="e" font-size="12" font-weight="bold" fill="#b4c6e0">11:15:09</text>
<text x="1265" y="249" class="e" font-size="12" font-weight="bold" fill="#b4c6e0">02:50</text>
<path d="M786 375.500H1289" stroke="#fff" stroke-dasharray="4 3"/>
<rect x="1303.500" y="367.500" width="60" height="16" fill="#808080" stroke="#e8e8e8"/><text x="1358" y="380" class="e" font-size="12.500" fill="#ddd">4194.00</text>
<path d="M785.500 97V567" stroke="#999"/>
<path d="M790 416l15 15M805 416l-15 15" stroke="#fff" stroke-width="2"/><path d="M794 425l12 8" stroke="#f0c020" stroke-width="3"/>
<text x="811" y="430" class="cg" textLength="275">O: 4199.75  H: 4200.00  L: 4199.50  C: 4199.50</text>
<path d="M786 435.500H1366M786 526.500H1366M786 547.500H1366" stroke="#b4c6e0"/>
<text x="791" y="453" font-size="12.500" fill="#9aa8c0">Volume 212</text>
<g transform="translate(780 430) scale(.33333)" fill="none" stroke-width="15">
<path stroke="#00b0b4" d="M40 279V231M58 279V225M79 279V246M118 279V183M136 279V234M157 279V186M175 279V216M214 279V189M232 279V219M292 279V258M310 279V249M331 279V258M367 279V231M406 279V255M427 279V240M445 279V267M466 279V234M541 279V249M562 279V258M580 279V261M619 279V237M697 279V243M715 279V36M754 279V171M775 279V228M832 279V201M850 279V225M889 279V249M910 279V231M928 279V246M949 279V216M985 279V138M1006 279V186M1024 279V234M1045 279V237M1084 279V210M1159 279V144M1198 279V57M1258 279V153M1276 279V258"/>
<path stroke="#a00000" d="M22 279V228M97 279V249M196 279V237M253 279V237M271 279V225M349 279V252M388 279V252M484 279V261M505 279V255M523 279V255M601 279V219M640 279V267M658 279V249M736 279V222M793 279V219M814 279V216M871 279V243M967 279V180M1063 279V204M1102 279V213M1123 279V195M1141 279V165M1180 279V30M1219 279V186M1237 279V102"/>
<path stroke="#fff" d="M676 279V255"/>
</g>
<path d="M1289 517.500H1301" stroke="#e8e8e8"/>
<rect x="1303.500" y="508.500" width="52" height="15" fill="#808080" stroke="#e8e8e8"/><text x="1352" y="520" class="e" font-size="12" fill="#ddd">82</text>
<path d="M800.500 97V530" stroke="#fff" stroke-dasharray="4 3"/>
<rect x="786.500" y="529.500" width="75" height="15" fill="#808080" stroke="#e8e8e8"/><text x="787" y="541" font-size="12" fill="#eee">.01 03:06:01</text>
<g class="tl"><text class="tl" x="836" y="562">03:30</text><text class="tl" x="926" y="562">04:12</text><text class="tl" x="1016" y="562">04:54</text><text class="tl" x="1106" y="562">05:36</text></g>
<rect x="1158.500" y="549.500" width="50" height="15" fill="none" stroke="#b4c6e0"/>
<text x="1238" y="563" font-size="12.500" fill="#9fb0c8" textLength="120">2021.06.01 06:15:00</text>

<!-- tab bar -->
<rect y="567" width="1366" height="5" fill="#f0f0f0"/>
<rect y="572" width="1366" height="1" fill="#222"/>
<rect y="573" width="1366" height="17" fill="#f4f4f4"/>
<path d="M2 590V575H88V590" fill="#ececec" stroke="#bbb"/>
<text x="14" y="586" class="tabg" textLength="62">MESM21,M1</text>
<path d="M89.500 573V589.500H165.500V573" fill="#fff" stroke="#111"/>
<text x="100" y="586" class="ui" textLength="53">EPM21,M1</text>
<path d="M1332 578v7l-3-3.500zM1350 578v7l3-3.500z" fill="#aaa"/>
<rect y="590" width="1366" height="4" fill="#f0f0f0"/>

<!-- terminal -->
<rect x="16" y="594" width="1330" height="1" fill="#b4b4b4"/>
<rect x="16" y="595" width="1330" height="23" fill="url(#hd)"/>
<rect x="15" y="594" width="1" height="85" fill="#bbb"/>
<rect x="16" y="618" width="1330" height="21" fill="#e6e6e6"/>
<rect x="16" y="639" width="1330" height="19" fill="#fff"/>
<rect x="16" y="658" width="1330" height="21" fill="#c2c2c2"/>
<path d="M145.500 595V658M235.500 595V658M306.500 595V658M365.500 595V658M465.500 595V658M565.500 595V658M665.500 595V658M765.500 595V658M905.500 595V658M1005.500 595V658M1105.500 595V658M1244.500 595V658" stroke="#d8d8d8"/>
<path d="M16 617.500H1346M16 638.500H1346" stroke="#d0d0d0"/>
<g class="ui">
<text class="ui" x="22" y="611">Время</text><text class="ui e" x="230" y="611">Символ</text><text class="ui e" x="300" y="611">Тикет</text><text class="ui e" x="360" y="611">Тип</text><text class="ui e" x="460" y="611">Объем</text><text class="ui e" x="560" y="611">Цена</text><text class="ui e" x="660" y="611">S / L</text><text class="ui e" x="760" y="611">T / P</text><text class="ui e" x="875" y="611">Время</text><text class="ui e" x="1000" y="611">Цена</text><text class="ui e" x="1100" y="611">Комиссия</text><text class="ui e" x="1239" y="611">Прибыль</text><text class="ui e" x="1339" y="611">Изменение</text>
<text class="ui" x="37" y="633">2021.06.01 05:44:23</text><text class="ui e" x="231" y="633">mesm21</text><text class="ui e" x="301" y="633">16733490</text><text class="ui e" x="361" y="633">sell</text><text class="ui e" x="461" y="633">1</text><text class="ui e" x="562" y="633">4205.25</text><text class="ui e" x="661" y="633">4207.00</text><text class="ui e" x="901" y="633">2021.06.01 05:53:40</text><text class="ui e" x="1001" y="633">4204.00</text><text class="ui e" x="1101" y="633">-0.84</text><text class="ui e" x="1241" y="633" style="fill:#1a1aee">6.25</text><text class="ui e" x="1341" y="633" style="fill:#1a1aee">0.03 %</text>
<text class="ui" x="37" y="653">2021.06.01 05:55:07</text><text class="ui e" x="231" y="653">mesm21</text><text class="ui e" x="301" y="653">16733529</text><text class="ui e" x="361" y="653">buy</text><text class="ui e" x="461" y="653">1</text><text class="ui e" x="562" y="653">4203.75</text><text class="ui e" x="661" y="653">4202.00</text><text class="ui e" x="901" y="653">2021.06.01 06:03:41</text><text class="ui e" x="1001" y="653">4205.00</text><text class="ui e" x="1101" y="653">-0.84</text><text class="ui e" x="1241" y="653" style="fill:#1a1aee">6.25</text><text class="ui e" x="1341" y="653" style="fill:#1a1aee">0.03 %</text>
</g>
<path d="M886 611l4.500-5 4.500 5z" fill="#222"/>
<path d="M19 621h8l2 2v11l-4 3h-6z" fill="#fff" stroke="#e05a20" stroke-width="1.400"/><path d="M21 625h5M21 628h5M21 631h4" stroke="#e05a20"/>
<path d="M19 641h8l2 2v11l-4 3h-6z" fill="#fff" stroke="#2e86d0" stroke-width="1.400"/><path d="M21 645h5M21 648h5M21 651h4" stroke="#2e86d0"/>
<circle cx="24" cy="669" r="5.500" fill="none" stroke="#333" stroke-width="1.200"/><path d="M21 669h6M24 666v6" stroke="#333" stroke-width="1.400"/>
<g font-size="11" font-weight="bold" fill="#111"><text x="37" y="673">Прибыль: 4.98</text><text x="121" y="673">Кредит: 0.00</text><text x="193" y="673">Депозит: 0.00</text><text x="272" y="673">Снятие: 0.00</text><text x="343" y="673">Баланс: 4.98</text><text x="1241" y="673" class="e">7.50</text></g>
<!-- scrollbar -->
<rect x="1346" y="594" width="18" height="87" fill="#f0f0f0"/>
<rect x="1346.500" y="596.500" width="15" height="14" rx="2" fill="#f6f6f6" stroke="#aaa"/><path d="M1350 605l4-4 4 4z" fill="#222"/>
<rect x="1346.500" y="627.500" width="15" height="31" rx="2" fill="#f6f6f6" stroke="#aaa"/><path d="M1350 640h8M1350 643h8M1350 646h8" stroke="#777"/>
<rect x="1346.500" y="664.500" width="15" height="14" rx="2" fill="#f6f6f6" stroke="#aaa"/><path d="M1350 670l4 4 4-4z" fill="#222"/>
<!-- bottom tabs -->
<rect y="679" width="1366" height="25" fill="#f0f0f0"/>
<rect x="15" y="680" width="1351" height="1" fill="#222"/>
<g class="tabg" style="fill:#777">
<text class="tabg" x="28" y="694">Торговля</text><text class="tabg" x="97" y="694">Активы</text><text class="tabg" x="221" y="694">Новости</text><text class="tabg" x="286" y="694">Почта</text><text x="320" y="697" font-size="9" fill="#e02020">7</text><text class="tabg" x="346" y="694">Календарь</text><text class="tabg" x="422" y="694">Компания</text><text class="tabg" x="496" y="694">Алерты</text><text class="tabg" x="555" y="694">Статьи</text><text class="tabg" x="611" y="694">Библиотека</text><text class="tabg" x="694" y="694">Эксперты</text><text class="tabg" x="765" y="694">Журнал</text>
</g>
<path d="M87.500 684V698M146.500 684V698M211.500 684V698M276.500 684V698M336.500 684V698M412.500 684V698M487.500 684V698M545.500 684V698M601.500 684V698M684.500 684V698M755.500 684V698" stroke="#aaa"/>
<path d="M147 681V701H211V681" fill="#fff" stroke="#111"/>
<text x="156" y="694" class="ui">История</text>
<rect y="702" width="1366" height="2" fill="#d8d8d8"/>
<!-- side label -->
<text x="7" y="602" class="m" font-size="11" font-weight="bold" fill="#111">x</text>
<rect x="2" y="608" width="12" height="94" fill="#aac4de"/>
<text transform="translate(12 699) rotate(-90)" font-size="11" fill="#111" textLength="68">Инструменты</text>
<!-- status -->
<rect y="704" width="1366" height="24" fill="#f0f0f0"/>
<text x="2" y="722" class="ui">Для вызова справки нажмите F1</text>
<text x="684" y="722" class="ui">Default</text>
<path d="M678.500 707V726M1181.500 707V726M1250.500 707V726" stroke="#bbb"/>
<rect x="1254" y="710" width="12" height="15" fill="#4aa0e0" stroke="#1e6fb8"/><circle cx="1265" cy="723" r="4" fill="#2fa52f"/>
<text x="1273" y="722" class="ui">2843 / 11 Kb</text>

<!-- taskbar -->
<rect y="728" width="1366" height="21" fill="#34517e"/>
<rect y="749" width="1366" height="19" fill="#0c2a5c"/>
<rect y="728" width="1366" height="1" fill="#14294d"/>
<circle cx="27" cy="748" r="19" fill="url(#orb)" stroke="#0f2a54" stroke-width="1.500"/>
<path d="M17 743q4-2 9 0l-1 5q-5-2-9 0z" fill="#e8502a"/><path d="M27 743q5 2 9 0l-1 5q-4 2-9 0z" fill="#70b02a"/><path d="M16 749q4-2 9 0l-1 5q-5-2-9 0z" fill="#2a8fd8"/><path d="M26 749q5 2 9 0l-1 5q-4 2-9 0z" fill="#f2b820"/>
<rect x="74" y="733" width="28" height="28" fill="#fff" stroke="#2b8a3a" stroke-width="2"/><text x="88" y="755" class="m" font-size="20" font-weight="bold" fill="#1f7a30">X</text>
<rect x="137" y="733" width="27" height="28" fill="#fff" stroke="#2a5ca8" stroke-width="2"/><text x="150" y="755" class="m" font-size="20" font-weight="bold" fill="#1d50a8">W</text>
<path d="M201 734l22-3 5 29-22 3z" fill="#d0d0d0" stroke="#555"/><path d="M204 737l15-2 1 6-15 2z" fill="#6a7a6a"/><path d="M206 746h16M207 751h16M208 756h16" stroke="#444" stroke-width="3" stroke-dasharray="3 2"/>
<path d="M259 741h12l3-4h18v26h-33z" fill="#f5d88a" stroke="#b8963c"/><rect x="266" y="752" width="20" height="10" fill="#7cb8e8"/>
<ellipse cx="337" cy="748" rx="15" ry="15.500" fill="#e01c2c"/><ellipse cx="337" cy="748" rx="6.500" ry="12" fill="#1f3d6c"/>
<rect x="370.500" y="729.500" width="58" height="38" rx="2" fill="#6d85a8" fill-opacity=".85" stroke="#a8b8cc"/>
<circle cx="399" cy="743" r="9" fill="#3a8a3a"/><circle cx="393" cy="750" r="7" fill="#e6b020"/><circle cx="405" cy="750" r="7" fill="#2f6fbf"/><circle cx="399" cy="747" r="6" fill="#e8801a"/><text x="399" y="751" class="m" font-size="10" font-weight="bold" fill="#fff">5</text>
<text x="1060" y="750" class="m" font-size="11" fill="#fff">EN</text>
<path d="M1087 749l5-2 5 2v5q0 4-5 7-5-3-5-7z" fill="#10a080"/><path d="M1089 754l2 2 4-4" stroke="#fff" fill="none" stroke-width="1.200"/>
<path d="M1111 750v9M1108 750h6" stroke="#ddd" stroke-width="2"/><path d="M1116 747l5 8" stroke="#e8a820" stroke-width="2"/>
<rect x="1131" y="745" width="8" height="12" fill="#999"/><rect x="1133" y="757" width="4" height="5" fill="#777"/><circle cx="1141" cy="758" r="4" fill="#2fa52f"/>
<circle cx="1165" cy="751" r="8" fill="#8ad04a"/><circle cx="1165" cy="751" r="5.500" fill="#6a3ea8"/><text x="1165" y="755" class="m" font-size="9" font-weight="bold" fill="#fff">4</text>
<path d="M1183 745v17" stroke="#eee" stroke-width="1.500"/><path d="M1184 745h8v6h-8z" fill="#eee"/><circle cx="1191" cy="756" r="4.500" fill="#d82020"/><path d="M1189 754l4 4M1193 754l-4 4" stroke="#fff"/>
<path d="M1205 761h2v-2h-2zM1208 761h2v-4h-2zM1211 761h2v-7h-2zM1214 761h2v-9h-2zM1217 761h1v-11h-1z" fill="#eee"/>
<path d="M1231 749h3l4-3v12l-4-3h-3z" fill="#eee"/><path d="M1240 749q2 3 0 6" stroke="#eee" fill="none"/>
<path d="M1253 749h8v9h-8z" fill="#eee"/><path d="M1255 745v4M1259 745v4M1257 758v4" stroke="#eee" stroke-width="1.500"/>
<text x="1312" y="745" class="m" font-size="11" fill="#fff">11:15</text>
<text x="1312" y="761" class="m" font-size="11" fill="#fff" textLength="54">01.06.2021</text>
<rect x="1352" y="729" width="14" height="39" fill="#2a4670" stroke="#567"/>

<!-- popup -->
<path d="M784 658.500H1127q4 0 4 4V723q0 4-4 4H1116L1115 752 1095 727H784q-4 0-4-4V662.500q0-4 4-4z" fill="url(#pop)" stroke="#7c8494"/>
<circle cx="801" cy="677" r="7" fill="none" stroke="#9aa0aa" stroke-width="3"/><path d="M801 685l1 13" stroke="#8a9098" stroke-width="4"/><circle cx="807" cy="678" r="7" fill="none" stroke="#e8b030" stroke-width="3"/><path d="M811 684l10 12" stroke="#d89820" stroke-width="3.500"/>
<text x="828" y="684" font-size="15" fill="#0a4fa8" textLength="222">Активировать Windows сейчас</text>
<text x="828" y="701" class="ui">Период активации истек.</text>
<text x="828" y="716" class="ui" textLength="290">Щелкните это сообщение, чтобы начать активацию.</text>
<path d="M1090 676l8 7" stroke="#8a8a8a" stroke-width="2.400"/><circle cx="1090" cy="675" r="2.800" fill="#8a8a8a"/>
<text x="1112" y="680" class="m" font-size="12" font-weight="bold" fill="#8a8a8a">X</text>
<text x="1135" y="698" class="ui">Сигналы</text>
<circle cx="1201" cy="690" r="6" fill="#6ab8ee" stroke="#2878b8"/><rect x="1197" y="692" width="9" height="6" fill="#3a8a3a"/><text x="1212" y="698" class="ui">VPS</text>
<rect x="1245" y="686" width="15" height="12" fill="#123" stroke="#2f8ad0"/><path d="M1246 696l4-4 3 2 5-5" stroke="#3ad03a" fill="none"/>
<text x="1262" y="698" class="ui" textLength="91">Тестер стратегий</text>
</svg>
</body></html>
